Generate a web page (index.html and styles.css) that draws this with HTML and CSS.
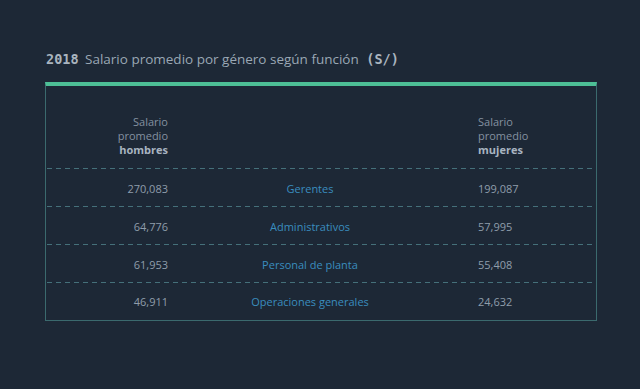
FILE: index.html
```html
<!DOCTYPE html>
<html lang="es">
<head>
<meta charset="utf-8">
<title>Salario promedio por género según función</title>
<link rel="stylesheet" href="styles.css">
</head>
<body>
<main class="page">
  <h1 class="title"><span class="mono">2018</span> Salario promedio por género según función <span class="mono unit">(S/)</span></h1>
  <section class="card">
    <div class="row head">
      <div class="cell left">Salario<br>promedio<br><b>hombres</b></div>
      <div class="cell mid"></div>
      <div class="cell right">Salario<br>promedio<br><b>mujeres</b></div>
    </div>
    <div class="row">
      <div class="cell left">270,083</div>
      <div class="cell mid">Gerentes</div>
      <div class="cell right">199,087</div>
    </div>
    <div class="row">
      <div class="cell left">64,776</div>
      <div class="cell mid">Administrativos</div>
      <div class="cell right">57,995</div>
    </div>
    <div class="row">
      <div class="cell left">61,953</div>
      <div class="cell mid">Personal de planta</div>
      <div class="cell right">55,408</div>
    </div>
    <div class="row last">
      <div class="cell left">46,911</div>
      <div class="cell mid">Operaciones generales</div>
      <div class="cell right">24,632</div>
    </div>
  </section>
</main>
</body>
</html>
```

FILE: styles.css
```css
* { box-sizing: border-box; }
html, body {
  margin: 0;
  padding: 0;
  background: #1d2836;
  height: 100%;
}
body {
  font-family: "Open Sans", "Noto Sans", sans-serif;
  color: #8f9dab;
}
.page {
  padding: 49px 43px 0 45px;
}
.title {
  margin: 0 0 0 1px;
  font-size: 13.5px;
  font-weight: 400;
  line-height: 20px;
  color: #9aa7b4;
  letter-spacing: 0;
}
.mono {
  font-family: "DejaVu Sans Mono", "Liberation Mono", monospace;
  font-weight: 700;
  color: #a9b4bf;
  margin-right: 3px;
}
.unit { margin-left: 4px; margin-right: 0; }
.card {
  margin-top: 13px;
  width: 552px;
  border: 1px solid #3b6a6e;
  border-top: 4px solid #4dbf96;
}
.row {
  display: grid;
  grid-template-columns: 122px 284px 1fr;
  align-items: center;
  height: 38px;
  position: relative;
  font-size: 11px;
}
.row::after {
  content: "";
  position: absolute;
  left: 1px;
  right: 0;
  bottom: 0;
  height: 1px;
  background: repeating-linear-gradient(to right, #45707a 0 5px, transparent 5px 9px);
}
.row.last { height: 37px; }
.row.last::after { display: none; }
.row.head {
  height: auto;
  padding: 29px 0 12px;
  line-height: 14px;
  align-items: start;
  color: #8491a0;
}
.head b { font-weight: 700; color: #a8b4c0; }
.cell.left { text-align: right; }
.cell.mid { text-align: center; color: #3a8dbf; }
.cell.right { padding-left: 26px; }
```
